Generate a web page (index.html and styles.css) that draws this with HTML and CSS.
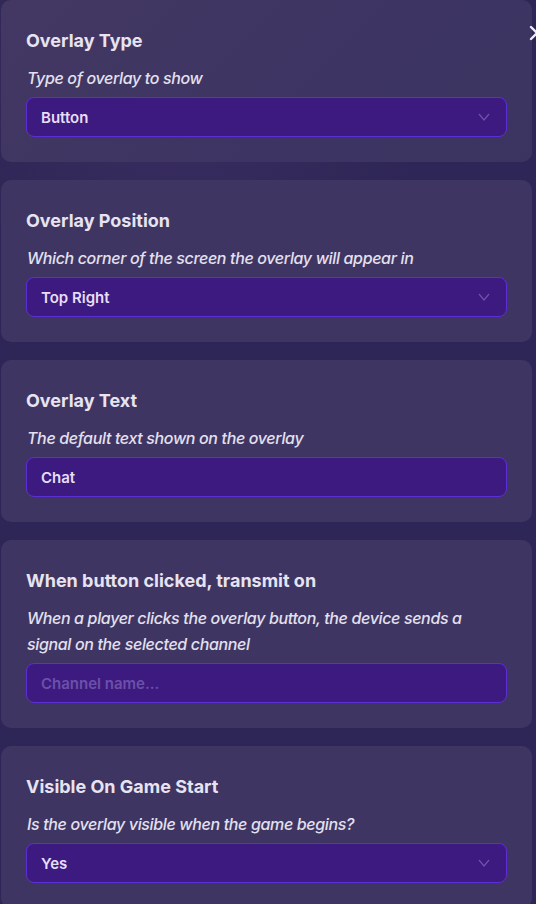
FILE: index.html
```html
<!DOCTYPE html>
<html>
<head>
<meta charset="utf-8">
<link rel="stylesheet" href="styles.css">
</head>
<body>
<div class="panel">
  <section class="card">
    <h2 class="title">Overlay Type</h2>
    <p class="desc">Type of overlay to show</p>
    <div class="field select"><span>Button</span><svg class="chev" viewBox="0 0 12 8"><path d="M1 1 L6 7 L11 1"/></svg></div>
  </section>
  <section class="card">
    <h2 class="title">Overlay Position</h2>
    <p class="desc">Which corner of the screen the overlay will appear in</p>
    <div class="field select"><span>Top Right</span><svg class="chev" viewBox="0 0 12 8"><path d="M1 1 L6 7 L11 1"/></svg></div>
  </section>
  <section class="card">
    <h2 class="title">Overlay Text</h2>
    <p class="desc">The default text shown on the overlay</p>
    <div class="field"><span>Chat</span></div>
  </section>
  <section class="card">
    <h2 class="title">When button clicked, transmit on</h2>
    <p class="desc">When a player clicks the overlay button, the device sends a signal on the selected channel</p>
    <div class="field"><span class="ph">Channel name...</span></div>
  </section>
  <section class="card">
    <h2 class="title">Visible On Game Start</h2>
    <p class="desc">Is the overlay visible when the game begins?</p>
    <div class="field select"><span>Yes</span><svg class="chev" viewBox="0 0 12 8"><path d="M1 1 L6 7 L11 1"/></svg></div>
  </section>
  <svg class="close" viewBox="0 0 18 18"><path d="M3 3 L15 15 M15 3 L3 15"/></svg>
</div>
</body>
</html>
```
FILE: styles.css
```css
html, body {
  margin: 0;
  padding: 0;
  height: 100%;
  overflow: hidden;
}
body {
  background: radial-gradient(circle at 180px 60px, #3a2e60 0, #2e2656 260px), #2e2656;
  font-family: Inter, "Noto Sans", sans-serif;
}
.panel {
  position: relative;
  display: flex;
  flex-direction: column;
  gap: 18px;
  padding: 0 4px 0 1px;
}
.card {
  background: #3e3563;
  border-radius: 10px;
  padding: 29px 25px 25px 25px;
  display: flex;
  flex-direction: column;
}
.card:first-child {
  background: linear-gradient(135deg, #433862 0%, #3d3463 60%, #3c3460 100%);
}
.card:last-child {
  background: linear-gradient(180deg, #3e3563 0%, #3e325e 60%, #3f2e58 100%);
  min-height: 200px;
}
.title {
  margin: 0;
  font-size: 18px;
  line-height: 24px;
  font-weight: 700;
  color: #e7e3f0;
  letter-spacing: 0;
}
.desc {
  margin: 12px 0 6px 1px;
  font-size: 16px;
  line-height: 26px;
  font-style: italic;
  font-weight: 500;
  color: #e4e0ee;
  letter-spacing: -0.35px;
}
.field {
  height: 40px;
  box-sizing: border-box;
  border: 1px solid #5c2fd6;
  border-radius: 8px;
  background: #3d1a80;
  display: flex;
  align-items: center;
  justify-content: space-between;
  padding: 0 16px 0 14px;
  font-size: 15px;
  font-weight: 600;
  color: #e6def4;
  letter-spacing: 0;
}
.ph {
  color: #6c50a8;
}
.chev {
  width: 12px;
  height: 8px;
  fill: none;
  stroke: #6f52ab;
  stroke-width: 1.2;
}
.close {
  position: absolute;
  left: 528px;
  top: 24px;
  width: 18px;
  height: 18px;
  fill: none;
  stroke: #f0ecf8;
  stroke-width: 2.4;
  stroke-linecap: round;
}
```
